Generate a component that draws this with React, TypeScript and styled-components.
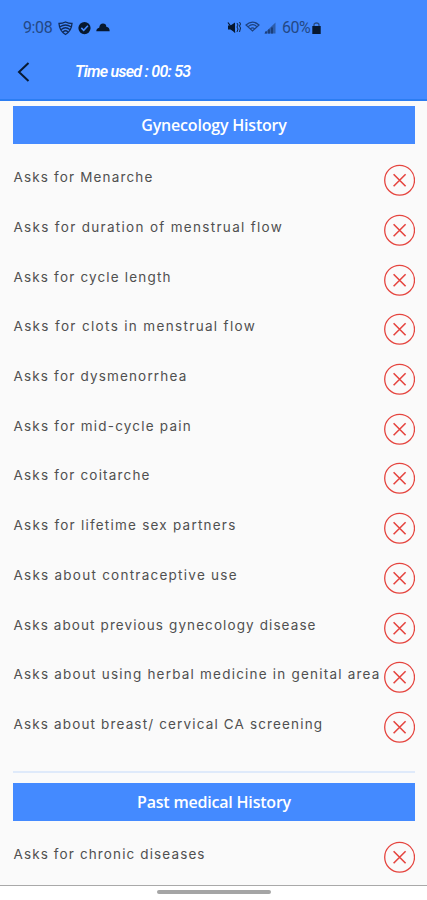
import React from 'react';
import styled, { createGlobalStyle } from 'styled-components';

const GlobalStyle = createGlobalStyle`
  * { box-sizing: border-box; }
  body { margin: 0; background: #fafafa; }
`;

const Screen = styled.div`
  width: 427px;
  height: 900px;
  overflow: hidden;
  display: flex;
  flex-direction: column;
  background: #fafafa;
  font-family: 'Inter', sans-serif;
`;

const Header = styled.header`
  flex: none;
  height: 101px;
  background: #448aff;
  border-bottom: 2px solid #2c7df2;
`;

const StatusBar = styled.div`
  height: 54px;
  padding: 2px 0 0 23px;
  display: flex;
  align-items: center;
  color: #234885;
`;

const StatusText = styled.span<{ $width: number; $spacing?: number }>`
  width: ${(p) => p.$width}px;
  font: 400 16px/20px Roboto, sans-serif;
  letter-spacing: ${(p) => p.$spacing ?? 0}px;
  white-space: nowrap;
`;

const StatusIcon = styled.svg<{ $gap: number }>`
  flex: none;
  display: block;
  margin-right: ${(p) => p.$gap}px;
`;

const TitleBar = styled.div`
  height: 36px;
  padding-left: 17px;
  display: flex;
  align-items: center;
`;

const BackButton = styled.button`
  width: 58px;
  height: 24px;
  padding: 0;
  border: 0;
  background: none;
  display: flex;
`;

const Timer = styled.h1`
  margin: 0;
  color: #fff;
  font: italic 600 16px/20px Roboto, sans-serif;
  letter-spacing: -0.75px;
  white-space: nowrap;
`;

const Content = styled.main`
  flex: none;
  height: 785px;
  padding: 5px 12px 0 13px;
  border-bottom: 1px solid #a9a9a9;
`;

const SectionTitle = styled.h2<{ $spacing: number }>`
  height: 38px;
  margin: 0 0 11.3px;
  display: flex;
  align-items: center;
  justify-content: center;
  background: #448aff;
  color: #fff;
  font: 600 16px/22px 'Open Sans', sans-serif;
  letter-spacing: ${(p) => p.$spacing}px;
`;

const Row = styled.div`
  height: 49.73px;
  display: flex;
  align-items: center;
  justify-content: space-between;
`;

const Label = styled.span<{ $spacing: number }>`
  padding: 0 0 6px 0.5px;
  color: #505050;
  font-size: 13.5px;
  line-height: 18px;
  letter-spacing: ${(p) => p.$spacing}px;
  white-space: nowrap;
`;

const CrossButton = styled.button`
  flex: none;
  width: 32px;
  height: 32px;
  margin-left: -10px;
  padding: 0;
  border: 0;
  background: none;
  display: flex;
`;

const Divider = styled.hr`
  height: 2px;
  margin: 18.8px 0 10.2px;
  border: 0;
  background: #dfeafa;
`;

const NavigationBar = styled.footer`
  flex: 1;
  padding-top: 4px;
  display: flex;
  justify-content: center;
  background: #fff;
`;

const HomeHandle = styled.div`
  width: 114px;
  height: 4px;
  border-radius: 2px;
  background: #a5a5a5;
`;

type Item = { text: string; spacing: number };

const gynecology: Item[] = [
  { text: 'Asks for Menarche', spacing: 1.15 },
  { text: 'Asks for duration of menstrual flow', spacing: 1.31 },
  { text: 'Asks for cycle length', spacing: 1.17 },
  { text: 'Asks for clots in menstrual flow', spacing: 1.34 },
  { text: 'Asks for dysmenorrhea', spacing: 1.17 },
  { text: 'Asks for mid-cycle pain', spacing: 1.21 },
  { text: 'Asks for coitarche', spacing: 1.18 },
  { text: 'Asks for lifetime sex partners', spacing: 1.23 },
  { text: 'Asks about contraceptive use', spacing: 1.25 },
  { text: 'Asks about previous gynecology disease', spacing: 1.1 },
  { text: 'Asks about using herbal medicine in genital area', spacing: 1.21 },
  { text: 'Asks about breast/ cervical CA screening', spacing: 1.15 },
];

const medical: Item[] = [{ text: 'Asks for chronic diseases', spacing: 1.12 }];

function ChecklistRow({ text, spacing }: Item) {
  return (
    <Row>
      <Label $spacing={spacing}>{text}</Label>
      <CrossButton aria-label="Not asked">
        <svg width="32" height="32" viewBox="0 0 32 32" fill="none" stroke="#e5453f">
          <circle cx="16.6" cy="16.2" r="14.9" strokeWidth="1.3" />
          <path d="M10.6 10.2 22.6 22.2M22.6 10.2 10.6 22.2" strokeWidth="1.6" />
        </svg>
      </CrossButton>
    </Row>
  );
}

export default function App() {
  return (
    <Screen>
      <GlobalStyle />
      <Header>
        <StatusBar>
          <StatusText $width={35} $spacing={-0.4}>9:08</StatusText>
          <StatusIcon $gap={5} width="15" height="15" viewBox="0 0 15 15" fill="none" stroke="#102b5a" strokeWidth="1.3">
            <path d="M1 2.5Q4.5 2.5 7.5 1Q10.5 2.5 14 2.5Q13.5 10 7.5 13.5Q1.5 10 1 2.5ZM2 5.8Q7.5 2.2 13 5.8M3.2 8.5Q7.5 5 11.8 8.5M5 11Q7.5 8.6 10 11" />
          </StatusIcon>
          <StatusIcon $gap={5} width="13" height="13" viewBox="0 0 13 13">
            <circle cx="6.5" cy="6.1" r="6.1" fill="#07182f" />
            <path d="m3.3 5.9 2.4 2.5 4.2-4.6" fill="none" stroke="#448aff" strokeWidth="1.6" />
          </StatusIcon>
          <StatusIcon $gap={117} width="14" height="10" viewBox="0 0 14 10">
            <path d="M.3 8.2Q.3 5.3 3.2 4.7 3.8.6 7 .6T10.3 3.8Q13.6 4.3 13.7 8.2Z" fill="#07182f" />
          </StatusIcon>
          <StatusIcon $gap={4} width="14" height="14" viewBox="0 0 14 14" fill="none" stroke="#07182f">
            <path d="M1 4.5h2.5L8 1.5v10L3.5 8.5H1Z" fill="#07182f" stroke="none" />
            <path d="m1 1.5 7 10" strokeWidth="1.2" />
            <path d="M10 2l1 2-1 2 1 2-1 3M12.5 1l1 2-1 2 1 2-1 4" strokeWidth=".9" />
          </StatusIcon>
          <StatusIcon $gap={4} width="15" height="14" viewBox="0 0 15 14" fill="none" stroke="#1d4280" strokeWidth="1.2">
            <path d="M1 4Q7.5-1.8 14 4L7.5 10ZM3.5 5.4Q7.5 2 11.5 5.4M5.5 7.6Q7.5 6 9.5 7.6" />
          </StatusIcon>
          <StatusIcon $gap={6} width="12" height="13" viewBox="0 0 12 13">
            <path d="M0 11.5 11.5.5v11Z" fill="#2d5dab" />
            <path d="M2 11.5v-2M5 11.5v-4M8 11.5v-6" stroke="#1b3f7c" strokeWidth="2" />
          </StatusIcon>
          <StatusText $width={30} $spacing={-0.5}>60%</StatusText>
          <StatusIcon $gap={0} width="9" height="13" viewBox="0 0 9 13">
            <path d="M2 6V3q0-2 2.5-2T7 3v3" fill="none" stroke="#294e87" strokeWidth="1.3" />
            <path d="M.3 4h8.4v8H.3Z" fill="#07182f" />
          </StatusIcon>
        </StatusBar>
        <TitleBar>
          <BackButton aria-label="Back">
            <svg width="14" height="24" viewBox="0 0 14 24" fill="none" stroke="#071a35" strokeWidth="2">
              <path d="M11.5 3 2 12l9.5 9" />
            </svg>
          </BackButton>
          <Timer>Time used : 00: 53</Timer>
        </TitleBar>
      </Header>
      <Content>
        <SectionTitle $spacing={-0.2}>Gynecology History</SectionTitle>
        {gynecology.map((item) => (
          <ChecklistRow key={item.text} {...item} />
        ))}
        <Divider />
        <SectionTitle $spacing={-0.2}>Past medical History</SectionTitle>
        {medical.map((item) => (
          <ChecklistRow key={item.text} {...item} />
        ))}
      </Content>
      <NavigationBar>
        <HomeHandle />
      </NavigationBar>
    </Screen>
  );
}
